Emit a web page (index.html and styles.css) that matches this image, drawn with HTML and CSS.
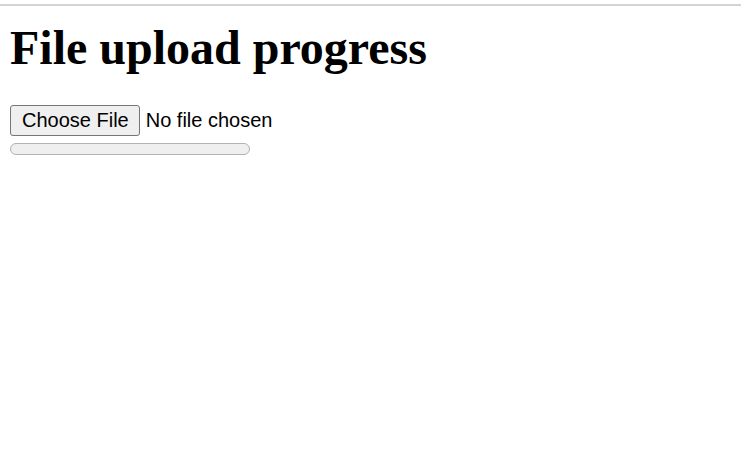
FILE: index.html
```html
<!DOCTYPE html>
<html lang="en">
<head>
    <meta charset="UTF-8">
    <meta name="viewport" content="width=device-width, initial-scale=1.0">
    <title>File upload progress</title>
    <link rel="stylesheet" href="styles.css">
</head>
<body>
    <div class="page">
        <h1>File upload progress</h1>

        <div class="upload">
            <label class="file-picker">
                <input type="file" id="file" class="file-input">
                <span class="file-button">Choose File</span>
                <span class="file-name" id="fileName">No file chosen</span>
            </label>
            <div class="progress"><div class="progress-fill" id="bar" style="width: 0%"></div></div>
        </div>
    </div>
</body>
</html>
```

FILE: styles.css
```css
html, body {
    margin: 0;
    padding: 0;
    background: #fff;
}
body {
    border-top: 2px solid #d3d3d3;
    margin-top: 4px;
}
.page {
    padding: 0 10px;
}
h1 {
    font-family: "Liberation Serif", "Times New Roman", serif;
    font-weight: bold;
    font-size: 48px;
    line-height: 56px;
    margin: 14px 0 29px;
    color: #000;
}
.upload {
    display: flex;
    flex-direction: column;
    align-items: flex-start;
    gap: 7px;
}
.file-picker {
    display: flex;
    align-items: center;
    gap: 6px;
    font-family: "Liberation Sans", Arial, sans-serif;
    font-size: 20px;
    color: #000;
    cursor: pointer;
}
.file-input {
    display: none;
}
.file-button {
    box-sizing: border-box;
    height: 31px;
    padding: 0 10px 0 11px;
    display: flex;
    align-items: center;
    background: #efefef;
    border: 1px solid #767676;
    border-radius: 3px;
}
.progress {
    box-sizing: border-box;
    width: 240px;
    height: 12px;
    border: 1px solid #b2b2b2;
    border-radius: 6px;
    background: #efefef;
    overflow: hidden;
}
.progress-fill {
    height: 100%;
    background: #1a73e8;
}
```
